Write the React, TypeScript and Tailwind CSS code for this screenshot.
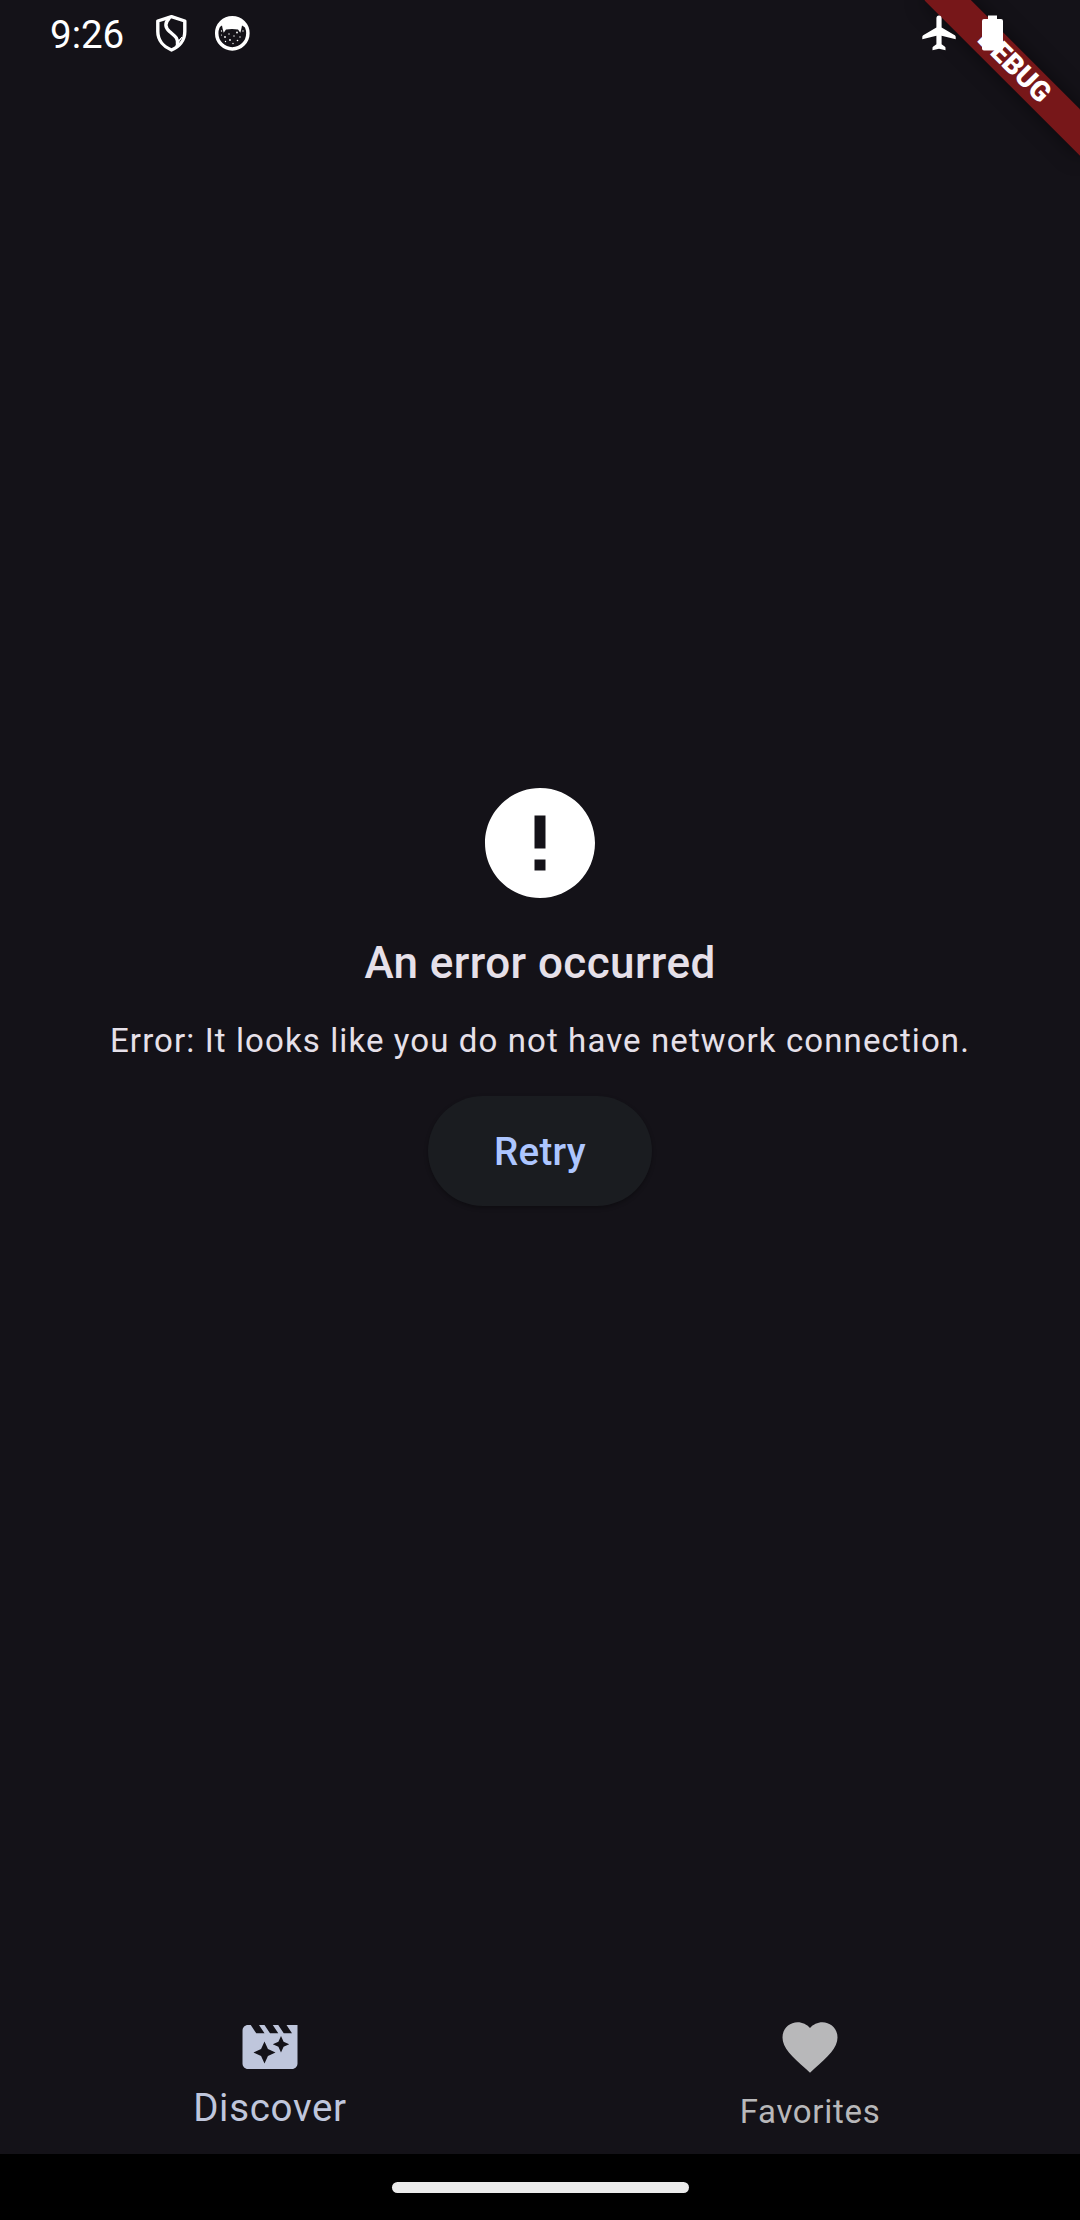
import { MdError, MdFavorite, MdMovieFilter } from "react-icons/md";

function ShieldIcon() {
  return (
    <svg width="32" height="38" viewBox="0 0 32 38" fill="none" stroke="#fff" strokeLinejoin="round" strokeLinecap="round">
      <path d="M15.500 2.600 L28.800 7 V17.500 C28.800 26.500 23 33 15.500 36 C8 33 1.800 26.500 1.800 17.500 V7 Z" strokeWidth="3.400" />
      <path d="M13 4.500 C8.500 9 9 13.500 13.500 17.500 C18 21.500 22.500 23.500 21.500 30.500" strokeWidth="3.400" />
      <path d="M21.500 28 L26 23 L20 32 Z" fill="#fff" strokeWidth="1" />
    </svg>
  );
}

function CatIcon() {
  return (
    <svg width="36" height="36" viewBox="0 0 36 36">
      <circle cx="18.300" cy="18.300" r="15.600" fill="none" stroke="#fff" strokeWidth="3.500" />
      <path
        d="M4 13 L8 10.500 L8.700 14 L9.700 17.700 L12 14.600 Q18 13.300 24 14.600 L26.300 17.700 L27.300 14 L28 10.500 L32 13 A15 15 0 0 0 4 13 Z"
        fill="#fff"
      />
      <g fill="#fff">
        <circle cx="7.500" cy="16" r="0.700" />
        <circle cx="29" cy="16" r="0.700" />
        <circle cx="11" cy="22" r="0.900" />
        <circle cx="15" cy="19" r="0.700" />
        <circle cx="20" cy="21" r="0.700" />
        <circle cx="23" cy="17.500" r="0.900" />
        <circle cx="26" cy="22" r="0.700" />
        <circle cx="11.500" cy="26.500" r="0.700" />
        <circle cx="16" cy="25" r="0.900" />
        <circle cx="19" cy="28.500" r="0.700" />
        <circle cx="23.500" cy="25.500" r="0.800" />
        <circle cx="7.500" cy="20" r="0.600" />
      </g>
    </svg>
  );
}

function AirplaneIcon() {
  return (
    <svg width="34" height="36" viewBox="0 0 34 36" fill="#fff">
      <path d="M17 0.500 C15.300 0.500 14.400 1.800 14.400 3.400 V12.500 L1.200 20.300 Q0.300 20.900 0.300 22 V24.300 L14.400 20.700 V29.300 L11 31.800 Q10.500 32.200 10.500 33 V35.300 L17 33.700 L23.500 35.300 V33 Q23.500 32.200 23 31.800 L19.600 29.300 V20.700 L33.700 24.300 V22 Q33.700 20.900 32.800 20.300 L19.600 12.500 V3.400 C19.600 1.800 18.700 0.500 17 0.500 Z" />
    </svg>
  );
}

function BatteryIcon() {
  return (
    <svg width="21" height="36" viewBox="0 0 21 36" fill="#fff">
      <path d="M6 0.500H15V4H19Q21 4 21 6V33.500Q21 35.500 19 35.500H2Q0 35.500 0 33.500V6Q0 4 2 4H6Z" />
    </svg>
  );
}

function DebugBanner() {
  return (
    <div className="pointer-events-none absolute top-0 right-0 h-[260px] w-[260px] overflow-hidden">
      <div className="absolute top-[49.600px] left-[83.900px] flex h-[33px] w-[220px] rotate-45 items-center justify-center bg-[#771719] text-[28.050px] leading-none font-black text-white shadow-[0_0_20px_rgba(0,0,0,0.5)]">
        DEBUG
      </div>
    </div>
  );
}

export default function App() {
  return (
    <div className="relative flex h-[2220px] w-[1080px] flex-col overflow-hidden bg-[#141218] font-[Roboto,sans-serif]">
      <DebugBanner />
      <header className="relative flex h-[66px] shrink-0 items-center pr-[77px] pl-[50px] text-white">
        <span className="w-[106px] pt-[3px] text-[38.500px] leading-[66px]">9:26</span>
        <ShieldIcon />
        <span className="ml-[26px]">
          <CatIcon />
        </span>
        <span className="ml-auto">
          <AirplaneIcon />
        </span>
        <span className="ml-[26px]">
          <BatteryIcon />
        </span>
      </header>

      <main className="flex flex-1 flex-col items-center pt-[711px]">
        <MdError size={132} className="text-white" />
        <h1 className="mt-[21px] text-[44px] leading-[66px] font-medium tracking-[0.410px] text-[#e6e0e9]">An error occurred</h1>
        <p className="mt-[23px] text-[33px] leading-[44px] tracking-[1.100px] text-[#e6e0e9]">
          Error: It looks like you do not have network connection.
        </p>
        <button className="mt-[33px] h-[110px] rounded-full bg-[#1a1c20] px-[66px] pt-[2px] text-[38.500px] font-medium tracking-[0.275px] text-[#adc6ff] shadow-[0_2px_4px_rgba(0,0,0,0.3)]">
          Retry
        </button>
      </main>

      <nav className="grid h-[154px] shrink-0 grid-cols-2 pt-[14px]">
        <div className="flex flex-col items-center text-[#bfc6dc]">
          <MdMovieFilter size={66} />
          <span className="mt-[6px] text-[38.500px] leading-[44px] tracking-[0.690px]">Discover</span>
        </div>
        <div className="flex flex-col items-center text-[#b8b8ba]">
          <MdFavorite size={66} />
          <span className="mt-[10px] text-[33px] leading-[44px] tracking-[0.690px]">Favorites</span>
        </div>
      </nav>
      <footer className="flex h-[66px] shrink-0 items-center justify-center bg-black">
        <div className="h-[11px] w-[297px] rounded-full bg-[#ebebeb]" />
      </footer>
    </div>
  );
}
